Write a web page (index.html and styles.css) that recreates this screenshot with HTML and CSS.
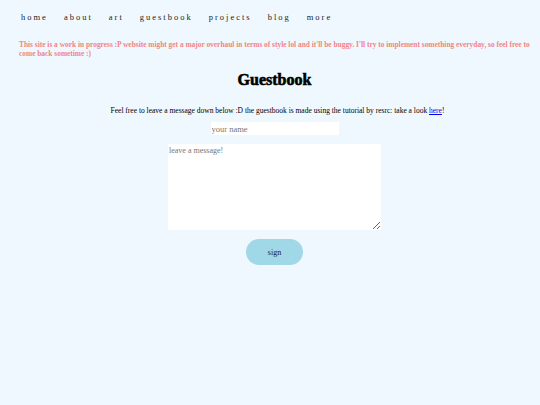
FILE: index.html
```html
<!DOCTYPE html>
<html>
<head>
<meta charset="utf-8">
<link rel="stylesheet" href="styles.css">
</head>
<body>
<nav class="nav">
  <a class="nav-link">home</a>
  <a class="nav-link">about</a>
  <a class="nav-link">art</a>
  <a class="nav-link">guestbook</a>
  <a class="nav-link">projects</a>
  <a class="nav-link">blog</a>
  <a class="nav-link">more</a>
</nav>
<p class="notice">This site is a work in progress :P website might get a major overhaul in terms of style lol and it'll be buggy. I'll try to implement something everyday, so feel free to come back sometime :)</p>
<main class="main">
  <h1 class="title">Guestbook</h1>
  <p class="intro">Feel free to leave a message down below :D the guestbook is made using the tutorial by resrc: take a look <a class="link" href="#">here</a>!</p>
  <form class="form">
    <input class="name" type="text" placeholder="your name">
    <textarea class="message" placeholder="leave a message!"></textarea>
    <button class="sign" type="button">sign</button>
  </form>
</main>
</body>
</html>
```
FILE: styles.css
```css
html, body {
  margin: 0;
  padding: 0;
  background: #f0f8ff;
  font-family: "Liberation Serif", "DejaVu Serif", serif;
  color: #111;
}
.nav {
  display: flex;
  gap: 16px;
  padding: 12px 0 0 21px;
  height: 14px;
}
.nav-link {
  font-size: 8.5px;
  letter-spacing: 2px;
  color: #222;
  line-height: 10px;
}
.notice {
  margin: 14px 0 0 19px;
  font-size: 7.4px;
  line-height: 9px;
  font-weight: bold;
  color: #f08585;
}
.main {
  display: flex;
  flex-direction: column;
  align-items: center;
  padding-left: 9px;
}
.title {
  margin: 12px 0 0;
  font-family: "Liberation Serif", serif;
  font-weight: bold;
  font-size: 16px;
  line-height: 20px;
  color: #000;
  -webkit-text-stroke: 0.6px #000;
}
.intro {
  margin: 16px 0 0 6px;
  font-size: 7.5px;
  line-height: 9px;
  color: #000;
}
.link {
  color: #0000ee;
}
.form {
  display: flex;
  flex-direction: column;
  align-items: center;
}
.name {
  margin-top: 7px;
  width: 128px;
  height: 13px;
  box-sizing: border-box;
  border: none;
  padding: 0 0 0 1px;
  background: #fff;
  font-family: "Liberation Serif", serif;
  font-size: 8.5px;
}
.name::placeholder, .message::placeholder {
  color: #777;
}
.message {
  margin-top: 9px;
  width: 213px;
  height: 86px;
  box-sizing: border-box;
  border: none;
  padding: 2px 1px;
  background: #fff;
  font-family: "Liberation Serif", serif;
  font-size: 8px;
}
.sign {
  margin-top: 9px;
  width: 57px;
  height: 26px;
  border: none;
  border-radius: 13px;
  background: #a0d8e8;
  font-family: "Liberation Serif", serif;
  font-size: 8px;
  color: #222;
}
```
